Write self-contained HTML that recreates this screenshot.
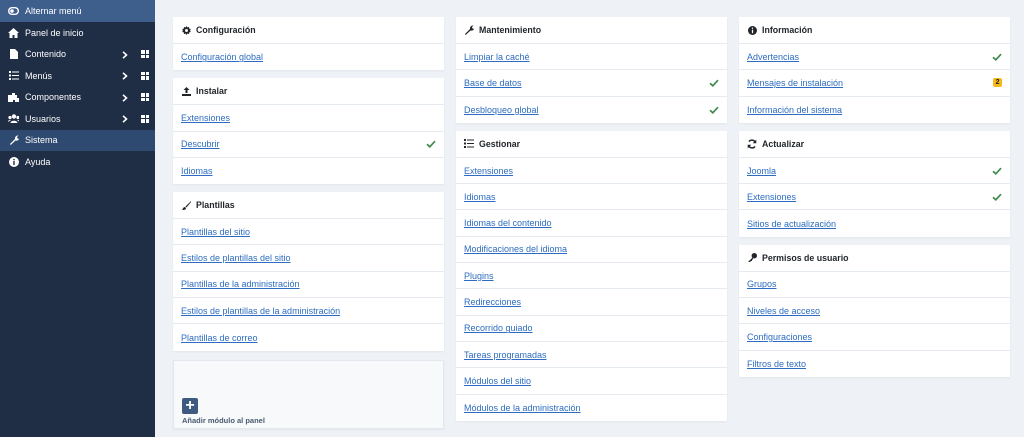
<!DOCTYPE html>
<html><head><meta charset="utf-8"><style>
*{box-sizing:border-box;margin:0;padding:0}
body{width:1024px;height:437px;overflow:hidden;background:#eef2f7;font-family:"Liberation Sans",sans-serif;position:relative}
#sb{position:absolute;left:0;top:0;width:155px;height:437px;background:#1f2d45}
.si{height:21.5px;display:flex;align-items:center;color:#fff;font-size:9px;padding-left:8px;position:relative}
.si .ic{width:11px;height:11px;margin-right:6px;display:inline-flex;align-items:center;justify-content:center}
.si.top{background:#3e5e8c;height:22px}
.si.act{background:#2f4a70}
.si .ch{position:absolute;left:122px;top:7px}
.si .gr{position:absolute;left:141px;width:8px;height:8px;display:grid;grid-template-columns:1fr 1fr;gap:1px}
.si .gr i{background:#fff}
.col{position:absolute;top:17px;width:271px}
.card{background:#fff;margin-bottom:8px;box-shadow:0 1px 2px rgba(0,0,0,.05)}
.hd{height:27px;display:flex;align-items:center;padding-left:8px;font-size:8.8px;font-weight:bold;color:#22262a;border-bottom:1px solid #e6ebf1}
.hd .ic{width:10px;margin-right:5px;display:inline-flex;justify-content:center}
.rw{height:26.3px;display:flex;align-items:center;padding-left:8px;padding-right:8px;font-size:9px;border-bottom:1px solid #e6ebf1;justify-content:space-between}
.rw:last-child{border-bottom:none}
.rw a{color:#2d6cc0;text-decoration:underline}
.bd{background:#f5b81c;color:#222;font-size:7px;font-weight:bold;padding:1px 2.5px;border-radius:2px}
</style></head><body>
<svg width="0" height="0" style="position:absolute"><defs><symbol id="ok" viewBox="0 0 10 8"><path d="M1 4.2l2.8 2.6L9 1.2" fill="none" stroke="#3e8a4e" stroke-width="1.7"/></symbol><symbol id="chv" viewBox="0 0 6 8"><path d="M1 .8L4.5 4 1 7.2" fill="none" stroke="#fff" stroke-width="1.6"/></symbol></defs></svg>
<div id="sb">
<div class="si top"><span class="ic"><svg width="11" height="8"><rect x="0.7" y="0.7" width="9.6" height="6.6" rx="3.3" fill="none" stroke="#fff" stroke-width="1.4"/><circle cx="4" cy="4" r="1.8" fill="#fff"/></svg></span>Alternar menú</div>
<div class="si"><span class="ic"><svg width="11" height="10"><path d="M5.5 0L0 5h1.5v5h3V7h2v3h3V5H11z" fill="#fff"/></svg></span>Panel de inicio</div>
<div class="si"><span class="ic"><svg width="8" height="10"><path d="M0 0h5l3 3v7H0z" fill="#fff"/></svg></span>Contenido<svg class="ch" width="6" height="8"><use href="#chv"/></svg><span class="gr"><i></i><i></i><i></i><i></i></span></div>
<div class="si"><span class="ic"><svg width="10" height="9"><path d="M0 0h2v2H0zM3 .5h7v1H3zM0 3.5h2v2H0zM3 4h7v1H3zM0 7h2v2H0zM3 7.5h7v1H3z" fill="#fff"/></svg></span>Menús<svg class="ch" width="6" height="8"><use href="#chv"/></svg><span class="gr"><i></i><i></i><i></i><i></i></span></div>
<div class="si"><span class="ic"><svg width="11" height="10"><path d="M0 3h4V1h3v2h2v3h2v4H7V8H5v2H0z" fill="#fff"/></svg></span>Componentes<svg class="ch" width="6" height="8"><use href="#chv"/></svg><span class="gr"><i></i><i></i><i></i><i></i></span></div>
<div class="si"><span class="ic"><svg width="12" height="9"><circle cx="6" cy="2.5" r="2.2" fill="#fff"/><circle cx="2" cy="3.5" r="1.6" fill="#fff"/><circle cx="10" cy="3.5" r="1.6" fill="#fff"/><path d="M2.5 9c0-3 7-3 7 0zM0 8c0-2 2-2.5 3-2zM12 8c0-2-2-2.5-3-2z" fill="#fff"/></svg></span>Usuarios<svg class="ch" width="6" height="8"><use href="#chv"/></svg><span class="gr"><i></i><i></i><i></i><i></i></span></div>
<div class="si act"><span class="ic"><svg width="10" height="10"><path d="M1 9L6 4a3 3 0 0 1 3.5-3.5L8 2l.5 1.5L10 4A3 3 0 0 1 6.5 5.5L1.7 10z" fill="#fff"/></svg></span>Sistema</div>
<div class="si"><span class="ic"><svg width="10" height="10"><circle cx="5" cy="5" r="5" fill="#fff"/><rect x="4.3" y="4" width="1.4" height="4" fill="#1f2d45"/><circle cx="5" cy="2.6" r=".8" fill="#1f2d45"/></svg></span>Ayuda</div>
</div>

<div class="col" style="left:173px">
<div class="card"><div class="hd"><span class="ic"><svg width="9" height="9" viewBox="0 0 10 10"><path d="M5 0l1 1.6 1.8-.6.2 1.9 1.8.6-.9 1.5.9 1.5-1.8.6-.2 1.9-1.8-.6L5 10 4 8.4l-1.8.6L2 7.1.2 6.5 1.1 5 .2 3.5 2 2.9l.2-1.9L4 1.6z" fill="#22262a"/><circle cx="5" cy="5" r="1.6" fill="#fff"/></svg></span>Configuración</div><div class="rw"><a>Configuración global</a></div></div>
<div class="card"><div class="hd"><span class="ic"><svg width="9" height="9"><path d="M4.5 0L1.5 3h2v3h2V3h2zM0 7h9v2H0z" fill="#22262a"/></svg></span>Instalar</div>
<div class="rw"><a>Extensiones</a></div><div class="rw"><a>Descubrir</a><svg width="10" height="8"><use href="#ok"/></svg></div><div class="rw"><a>Idiomas</a></div></div>
<div class="card"><div class="hd"><span class="ic"><svg width="9" height="9"><path d="M9 0L3.5 5.5 4.5 6.5 9 1zM3 6c-2 0-2 2-3 3 2 0 4 0 4-2z" fill="#22262a"/></svg></span>Plantillas</div>
<div class="rw"><a>Plantillas del sitio</a></div><div class="rw"><a>Estilos de plantillas del sitio</a></div><div class="rw"><a>Plantillas de la administración</a></div><div class="rw"><a>Estilos de plantillas de la administración</a></div><div class="rw"><a>Plantillas de correo</a></div></div>
<div class="card" style="background:#f8f9fb;height:69px;position:relative;border:1px solid #e3e8ef;margin-top:9px">
<div style="position:absolute;left:8px;top:37px;width:16px;height:16px;background:#3f5a80;border-radius:2px;color:#fff;font-size:16px;font-weight:bold;line-height:16px;text-align:center">+</div>
<div style="position:absolute;left:8px;top:55px;font-size:7.5px;font-weight:bold;color:#4a5a70">Añadir módulo al panel</div></div>
</div>

<div class="col" style="left:456px">
<div class="card"><div class="hd"><span class="ic"><svg width="10" height="10"><path d="M1 9L6 4a3 3 0 0 1 3.5-3.5L8 2l.5 1.5L10 4A3 3 0 0 1 6.5 5.5L1.7 10z" fill="#22262a"/></svg></span>Mantenimiento</div>
<div class="rw"><a>Limpiar la caché</a></div><div class="rw"><a>Base de datos</a><svg width="10" height="8"><use href="#ok"/></svg></div><div class="rw"><a>Desbloqueo global</a><svg width="10" height="8"><use href="#ok"/></svg></div></div>
<div class="card"><div class="hd"><span class="ic"><svg width="10" height="9"><path d="M0 0h2v2H0zM3 .5h7v1H3zM0 3.5h2v2H0zM3 4h7v1H3zM0 7h2v2H0zM3 7.5h7v1H3z" fill="#22262a"/></svg></span>Gestionar</div>
<div class="rw"><a>Extensiones</a></div><div class="rw"><a>Idiomas</a></div><div class="rw"><a>Idiomas del contenido</a></div><div class="rw"><a>Modificaciones del idioma</a></div><div class="rw"><a>Plugins</a></div><div class="rw"><a>Redirecciones</a></div><div class="rw"><a>Recorrido guiado</a></div><div class="rw"><a>Tareas programadas</a></div><div class="rw"><a>Módulos del sitio</a></div><div class="rw"><a>Módulos de la administración</a></div></div>
</div>

<div class="col" style="left:739px">
<div class="card"><div class="hd"><span class="ic"><svg width="9" height="9"><circle cx="4.5" cy="4.5" r="4.5" fill="#22262a"/><rect x="3.9" y="3.7" width="1.2" height="3.5" fill="#fff"/><circle cx="4.5" cy="2.2" r=".7" fill="#fff"/></svg></span>Información</div>
<div class="rw"><a>Advertencias</a><svg width="10" height="8"><use href="#ok"/></svg></div><div class="rw"><a>Mensajes de instalación</a><span class="bd">2</span></div><div class="rw"><a>Información del sistema</a></div></div>
<div class="card"><div class="hd"><span class="ic"><svg width="10" height="10" viewBox="0 0 10 10"><path d="M8.3 3.5A3.6 3.6 0 0 0 2 2.6M1.7 6.5A3.6 3.6 0 0 0 8 7.4" fill="none" stroke="#22262a" stroke-width="1.5"/><path d="M9.3 0.6v3.6H5.7zM0.7 9.4V5.8h3.6z" fill="#22262a"/></svg></span>Actualizar</div>
<div class="rw"><a>Joomla</a><svg width="10" height="8"><use href="#ok"/></svg></div><div class="rw"><a>Extensiones</a><svg width="10" height="8"><use href="#ok"/></svg></div><div class="rw"><a>Sitios de actualización</a></div></div>
<div class="card"><div class="hd"><span class="ic"><svg width="9" height="9"><circle cx="6.3" cy="2.7" r="2.7" fill="#22262a"/><path d="M5 4L0 9h2l1-1 1 0 0-1 1-1z" fill="#22262a"/></svg></span>Permisos de usuario</div>
<div class="rw"><a>Grupos</a></div><div class="rw"><a>Niveles de acceso</a></div><div class="rw"><a>Configuraciones</a></div><div class="rw"><a>Filtros de texto</a></div></div>
</div>
</body></html>
